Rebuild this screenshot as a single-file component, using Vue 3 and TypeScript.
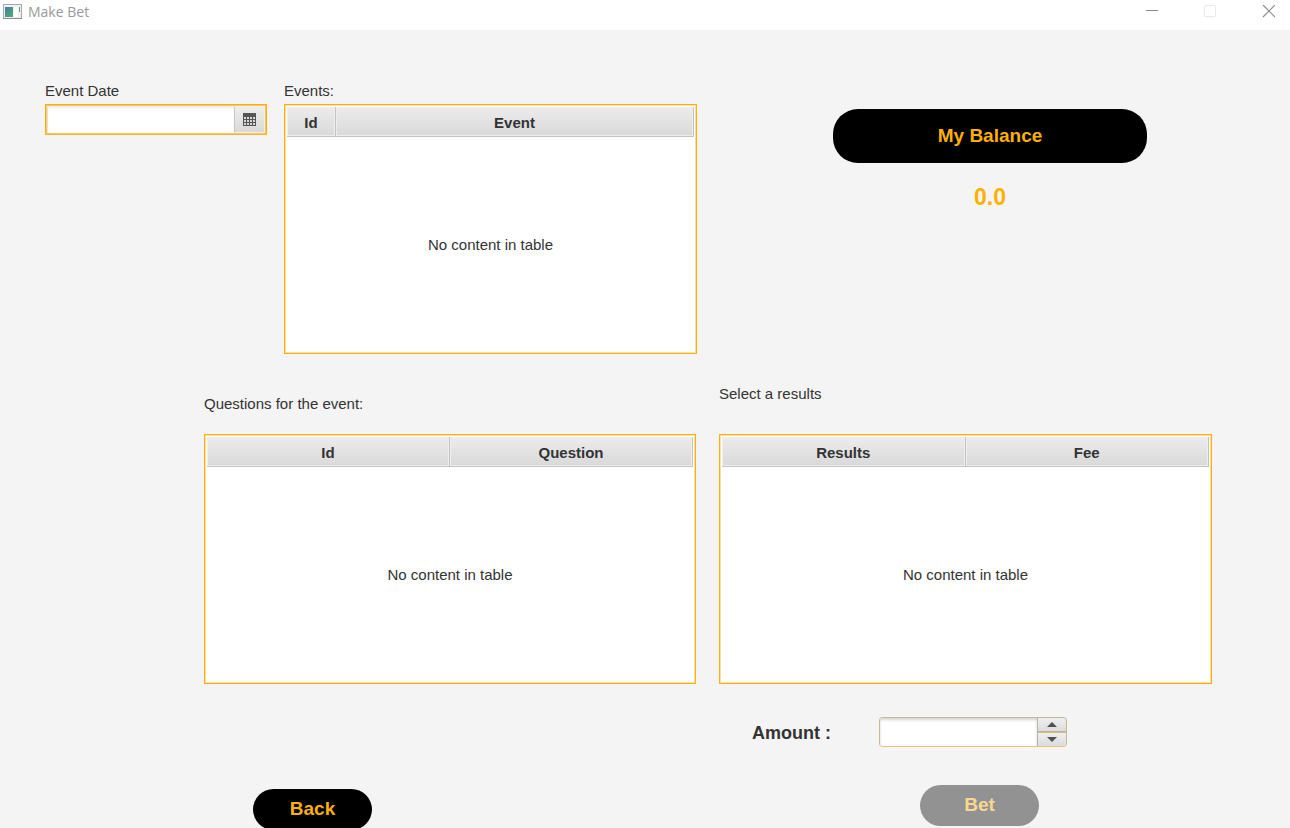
<script setup lang="ts">
import { ref } from 'vue'

interface TableSpec {
  id: string
  label: string
  columns: string[]
}

const events: TableSpec = { id: 'events', label: 'Events:', columns: ['Id', 'Event'] }
const markets: TableSpec[] = [
  { id: 'questions', label: 'Questions for the event:', columns: ['Id', 'Question'] },
  { id: 'results', label: 'Select a results', columns: ['Results', 'Fee'] },
]

const eventDate = ref('')
const amount = ref('')
const balance = ref(0)

function step(delta: number): void {
  amount.value = String(Math.max(0, Number(amount.value || 0) + delta))
}
</script>

<template>
  <div class="window">
    <header class="titlebar">
      <svg class="app-icon" width="20" height="17" viewBox="0 0 20 17" aria-hidden="true">
        <defs>
          <linearGradient id="screen" x1="0" y1="0" x2="1" y2="1">
            <stop offset="0" stop-color="#3f7fa6" />
            <stop offset="1" stop-color="#4fae74" />
          </linearGradient>
        </defs>
        <rect x="0.5" y="0.5" width="18" height="14" fill="#f0f0f2" stroke="#a9a9ae" />
        <rect x="2" y="3" width="8" height="10" fill="url(#screen)" />
        <rect x="11" y="3" width="4" height="10" fill="#fff" />
        <path d="M16.5 3v5" stroke="#55a07c" />
        <path d="M0 14.5h19" stroke="#8d8d92" />
      </svg>
      <span class="title">Make Bet</span>
      <div class="controls">
        <button type="button" aria-label="Minimize">
          <svg width="14" height="14" viewBox="0 0 14 14"><path d="M1 5.5h12" stroke="#8c8c8c" /></svg>
        </button>
        <button type="button" aria-label="Maximize" disabled>
          <svg width="14" height="14" viewBox="0 0 14 14"><rect x="1.5" y="0.5" width="11" height="11" rx="1" fill="none" stroke="#e8e8e8" /></svg>
        </button>
        <button type="button" aria-label="Close">
          <svg width="14" height="14" viewBox="0 0 14 14"><path d="M2 0l12 12M14 0L2 12" stroke="#8c8c8c" stroke-width="1.2" /></svg>
        </button>
      </div>
    </header>

    <main class="content">
      <section class="top">
        <div class="field">
          <label class="caption" for="event-date">Event Date</label>
          <div class="date-picker">
            <input id="event-date" v-model="eventDate" type="text" />
            <button type="button" aria-label="Open calendar">
              <svg width="13" height="13" viewBox="0 0 13 13">
                <rect width="13" height="13" fill="#555" />
                <path d="M1 5h11M1 8h11M1 11h11" stroke="#d6d6d6" stroke-width="2" stroke-dasharray="2 1" />
              </svg>
            </button>
          </div>
        </div>

        <div class="field">
          <span :id="events.id" class="caption">{{ events.label }}</span>
          <div class="table-box">
            <table :aria-labelledby="events.id">
              <thead>
                <tr>
                  <th class="narrow">{{ events.columns[0] }}</th>
                  <th>{{ events.columns[1] }}</th>
                </tr>
              </thead>
              <tbody>
                <tr><td colspan="2">No content in table</td></tr>
              </tbody>
            </table>
          </div>
        </div>

        <div class="balance">
          <button type="button" class="pill large">My Balance</button>
          <output>{{ balance.toFixed(1) }}</output>
        </div>
      </section>

      <section class="pair markets">
        <div v-for="t in markets" :key="t.id" class="field" :class="t.id">
          <span :id="t.id" class="caption">{{ t.label }}</span>
          <div class="table-box">
            <table :aria-labelledby="t.id">
              <thead>
                <tr><th v-for="c in t.columns" :key="c">{{ c }}</th></tr>
              </thead>
              <tbody>
                <tr><td :colspan="t.columns.length">No content in table</td></tr>
              </tbody>
            </table>
          </div>
        </div>
      </section>

      <section class="pair actions">
        <button type="button" class="pill back">Back</button>
        <div class="bet-form">
          <div class="amount-row">
            <label for="amount">Amount :</label>
            <div class="spinner">
              <input id="amount" v-model="amount" type="text" inputmode="decimal" />
              <div class="steps">
                <button type="button" aria-label="Increase" @click="step(1)">
                  <svg width="10" height="5" viewBox="0 0 10 5"><path d="M0 5L5 0l5 5z" fill="#505050" /></svg>
                </button>
                <button type="button" aria-label="Decrease" @click="step(-1)">
                  <svg width="10" height="5" viewBox="0 0 10 5"><path d="M0 0h10L5 5z" fill="#505050" /></svg>
                </button>
              </div>
            </div>
          </div>
          <button type="button" class="pill bet" disabled>Bet</button>
        </div>
      </section>
    </main>
  </div>
</template>

<style>
body {
  margin: 0;
}
</style>

<style scoped>
.window,
.window * {
  box-sizing: border-box;
}
.window {
  height: 100vh;
  overflow: hidden;
  background: #f4f4f4;
  color: #333;
  font: 15px/18px 'Liberation Sans', Arial, sans-serif;
}
button,
input {
  font: inherit;
  color: inherit;
  margin: 0;
  padding: 0;
  border: 0;
}
input {
  min-width: 0;
  padding: 0 8px;
  outline: 0;
}
svg {
  display: block;
}
.titlebar {
  display: flex;
  align-items: center;
  height: 30px;
  padding: 0 0 6px 3px;
  background: #fff;
}
.title {
  margin-left: 5px;
  color: #999;
  font-family: 'Open Sans', 'Noto Sans', sans-serif;
  font-size: 14px;
}
.controls {
  display: flex;
  gap: 14px;
  margin-left: auto;
}
.controls button {
  display: grid;
  place-items: center;
  width: 44px;
  height: 22px;
  background: none;
}
.top {
  display: grid;
  grid-template-columns: minmax(0, 222fr) minmax(0, 413fr) minmax(0, 433fr);
  column-gap: 17px;
  align-items: start;
  padding: 52px 143px 0 45px;
}
.field {
  display: flex;
  flex-direction: column;
  min-width: 0;
}
.caption {
  margin-bottom: 4px;
}
.date-picker {
  display: flex;
  height: 31px;
  border: 1px solid #ffb000;
  border-bottom-color: #f5b32e;
  border-radius: 1px;
  background: #fff;
  box-shadow: inset 0 0 0 1px #f8c860;
  padding: 1px;
}
.date-picker input {
  flex: 1;
  background: #fff;
  box-shadow: inset 0 2px 2px #ececec, inset 1px 0 1px #ddd;
}
.date-picker button {
  display: grid;
  place-items: center;
  width: 31px;
  border: 1px solid #f0f0f0;
  border-left: 1px solid #c8c8c8;
  background: linear-gradient(#ededed, #d9d9d9);
}
.table-box {
  height: 250px;
  padding: 2px;
  border: 1px solid #ffb000;
  background: #fff;
  box-shadow: 0 0 0 1px #f5dfae inset;
}
table {
  width: 100%;
  height: 100%;
  table-layout: fixed;
  border-spacing: 0;
}
th {
  height: 30px;
  padding: 2px 0 0;
  border-right: 1px solid #c3c3c3;
  border-bottom: 1px solid #c3c3c3;
  background: linear-gradient(#ececec, #d9d9d9);
  box-shadow: inset 0 0 0 1px #eee;
}
.narrow {
  width: 49px;
}
td {
  padding: 2px 0 0;
  text-align: center;
}
.balance {
  display: flex;
  flex-direction: column;
  align-items: stretch;
  gap: 20px;
  margin: 27px 0 0 119px;
}
.balance output {
  color: #ffb000;
  font-size: 23px;
  line-height: 28px;
  font-weight: bold;
  text-align: center;
}
.pill {
  width: 119px;
  height: 41px;
  padding-bottom: 1px;
  border-radius: 25px;
  background: #000;
  color: #ffb000;
  font-size: 19px;
  font-weight: bold;
}
.pill.large {
  width: 100%;
  height: 54px;
}
.pill:disabled {
  background: #929292;
  color: #f9d78f;
}
.pair {
  display: grid;
  grid-template-columns: minmax(0, 492fr) minmax(0, 493fr);
  column-gap: 23px;
  padding: 0 78px 0 204px;
}
.markets {
  padding-top: 31px;
}
.questions {
  padding-top: 10px;
}
.questions .caption {
  margin-bottom: 21px;
}
.results .caption {
  margin-bottom: 31px;
}
.actions {
  padding-top: 33px;
}
.back {
  margin: 72px 0 0 49px;
}
.amount-row {
  display: flex;
  align-items: center;
  gap: 50px;
  padding-left: 33px;
}
.amount-row label {
  width: 77px;
  padding-top: 2px;
  font-size: 18px;
  font-weight: bold;
  white-space: nowrap;
}
.spinner {
  display: flex;
  width: 188px;
  height: 30px;
  overflow: hidden;
  border: 1px solid #c6b994;
  border-bottom-color: #e6c579;
  border-radius: 4px;
}
.spinner input {
  flex: 1;
  background: #fff;
  box-shadow: inset 0 2px 3px #d4d4d4;
}
.steps {
  display: grid;
  grid-template-rows: 1fr 1fr;
  width: 29px;
  border-left: 1px solid #b5b5b5;
}
.steps button {
  display: grid;
  place-items: center;
  background: linear-gradient(#eee, #dcdcdc);
}
.steps button:first-child {
  border-bottom: 1px solid #b8b3a6;
}
.steps button + button {
  border-top: 1px solid #d9bd7c;
}
.bet {
  display: block;
  margin: 38px 0 0 201px;
}
</style>
